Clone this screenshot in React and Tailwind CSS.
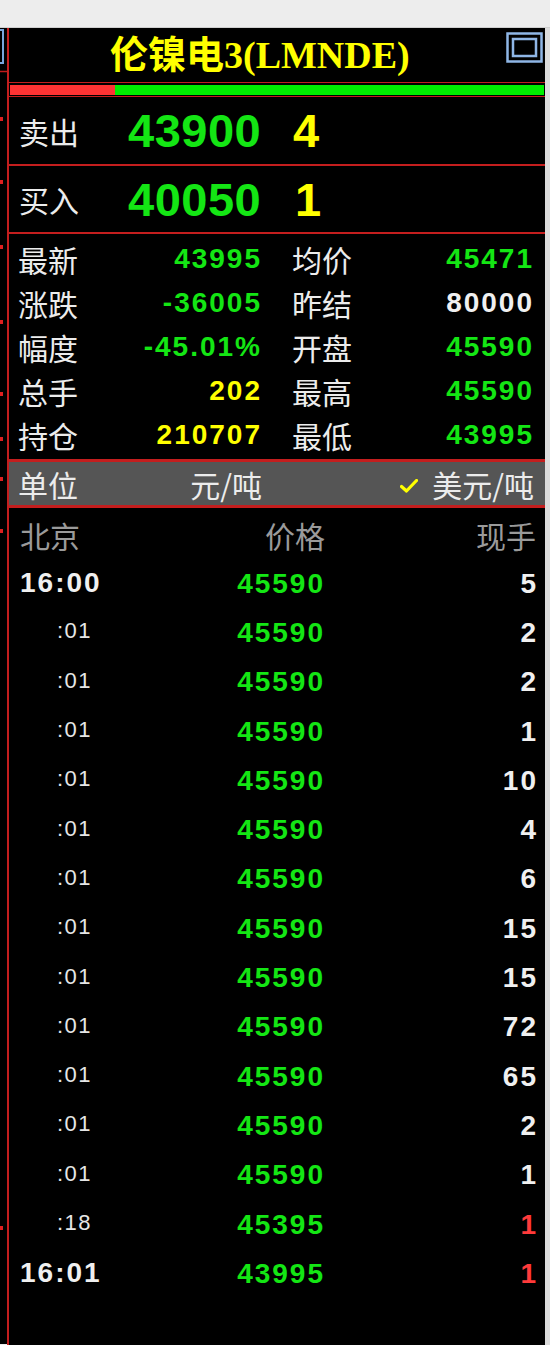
import React from "react";

const CJK = { fontFamily: '"Noto Sans CJK SC", "Noto Sans", sans-serif' };
const NUM = { fontFamily: '"Liberation Sans", Arial, sans-serif' };
const TITLE = { fontFamily: '"Liberation Serif", "Noto Sans CJK SC", serif' };

const stats = [
  ["最新", "43995", "text-[#14e614]", "均价", "45471", "text-[#14e614]"],
  ["涨跌", "-36005", "text-[#14e614]", "昨结", "80000", "text-[#f0f0f0]"],
  ["幅度", "-45.01%", "text-[#14e614]", "开盘", "45590", "text-[#14e614]"],
  ["总手", "202", "text-[#ffff00]", "最高", "45590", "text-[#14e614]"],
  ["持仓", "210707", "text-[#ffff00]", "最低", "43995", "text-[#14e614]"],
];

const trades = [
  ["16:00", true, "45590", "5", false],
  [":01", false, "45590", "2", false],
  [":01", false, "45590", "2", false],
  [":01", false, "45590", "1", false],
  [":01", false, "45590", "10", false],
  [":01", false, "45590", "4", false],
  [":01", false, "45590", "6", false],
  [":01", false, "45590", "15", false],
  [":01", false, "45590", "15", false],
  [":01", false, "45590", "72", false],
  [":01", false, "45590", "65", false],
  [":01", false, "45590", "2", false],
  [":01", false, "45590", "1", false],
  [":18", false, "45395", "1", true],
  ["16:01", true, "43995", "1", true],
];

function LeftStrip() {
  const dots = [120, 183, 248, 323, 395, 440, 480, 532, 1229];
  return (
    <svg width="7" height="1316" viewBox="0 0 7 1316" className="block">
      <rect x="0" y="0" width="7" height="1316" fill="#000" />
      <rect x="-2" y="2" width="5" height="33" fill="none" stroke="#7aa6dc" strokeWidth="2" />
      <line x1="0" y1="43.5" x2="7" y2="43.5" stroke="#c01c1c" strokeWidth="1.5" />
      {dots.map((d, i) => (
        <rect key={i} x="0" y={d - 29 - 2} width="3" height="4" fill="#e02020" />
      ))}
    </svg>
  );
}

function CornerIcon() {
  return (
    <svg width="37" height="31" viewBox="0 0 37 31" className="block">
      <rect x="1.5" y="1.5" width="34" height="28" fill="none" stroke="#8fb6e6" strokeWidth="2.5" />
      <rect x="7" y="7" width="23" height="17" fill="none" stroke="#8fb6e6" strokeWidth="2.5" />
    </svg>
  );
}

function Check() {
  return (
    <svg width="18" height="14" viewBox="0 0 18 14" className="block">
      <path d="M1.5 7.5 L6.5 12 L16.5 1.5" fill="none" stroke="#ffff00" strokeWidth="3.2" strokeLinecap="round" strokeLinejoin="round" />
    </svg>
  );
}

export default function App() {
  return (
    <div className="w-[550px] h-[1345px] bg-[#ececec] flex flex-col overflow-hidden">
      <div className="h-[28px] bg-[#ededed] border-b border-[#cfcfcf] shrink-0" />
      <div className="flex flex-1 min-h-0">
        <LeftStrip />
        <div className="w-[538px] bg-black border-l-2 border-[#c41e1e] flex flex-col">
          {/* title */}
          <div className="h-[54px] flex items-start relative">
            <div className="pl-[101px] pt-[8px] text-[#ffff00] text-[38px] leading-none font-bold whitespace-nowrap" style={TITLE}>
              伦镍电3(LMNDE)
            </div>
            <div className="ml-auto mt-[4px] mr-[2px]">
              <CornerIcon />
            </div>
          </div>
          {/* bar */}
          <div className="h-[1px] bg-[#c41e1e]" />
          <div className="h-[13px] flex items-center pl-[1px] pr-[1px]">
            <div className="h-[10px] w-[105px] bg-[#ff3434]" />
            <div className="h-[10px] flex-1 bg-[#00ee00]" />
          </div>
          <div className="h-[1px] bg-[#c41e1e]" />
          {/* sell */}
          <div className="h-[67px] flex items-center pl-[10px]">
            <div className="w-[109px] text-[30px] leading-none text-[#ececec]" style={CJK}>卖出</div>
            <div className="w-[165px] text-[47px] leading-none font-bold text-[#14e614] tracking-[0.5px]" style={NUM}>43900</div>
            <div className="text-[47px] leading-none font-bold text-[#ffff00]" style={NUM}>4</div>
          </div>
          <div className="h-[2px] bg-[#c41e1e]" />
          {/* buy */}
          <div className="h-[66px] flex items-center pl-[10px]">
            <div className="w-[109px] text-[30px] leading-none text-[#ececec]" style={CJK}>买入</div>
            <div className="w-[165px] text-[47px] leading-none font-bold text-[#14e614] tracking-[0.5px]" style={NUM}>40050</div>
            <div className="text-[47px] leading-none font-bold text-[#ffff00] pl-[2px]" style={NUM}>1</div>
          </div>
          <div className="h-[2px] bg-[#c41e1e]" />
          {/* stats */}
          <div className="pt-[3px] pb-[2px] flex flex-col">
            {stats.map((r, i) => (
              <div key={i} className="h-[44px] flex items-center pl-[9px] pr-[11px]">
                <div className="w-[244px] flex items-center justify-between">
                  <span className="text-[30px] leading-none text-[#ececec]" style={CJK}>{r[0]}</span>
                  <span className={`text-[28px] leading-none font-bold tracking-[2px] ${r[2]}`} style={NUM}>{r[1]}</span>
                </div>
                <div className="flex-1 flex items-center justify-between pl-[30px]">
                  <span className="text-[30px] leading-none text-[#ececec]" style={CJK}>{r[3]}</span>
                  <span className={`text-[28px] leading-none font-bold tracking-[2px] ${r[5]}`} style={NUM}>{r[4]}</span>
                </div>
              </div>
            ))}
          </div>
          {/* unit band */}
          <div className="h-[3px] bg-[#c41e1e]" />
          <div className="h-[43px] bg-[#555555] flex items-center pl-[9px] pr-[11px]">
            <div className="w-[244px] flex items-center justify-between">
              <span className="text-[30px] leading-none text-[#ececec]" style={CJK}>单位</span>
              <span className="text-[30px] leading-none text-[#ececec]" style={CJK}>元/吨</span>
            </div>
            <div className="flex-1 flex items-center justify-end">
              <span className="mr-[14px] mt-[4px]"><Check /></span>
              <span className="text-[30px] leading-none text-[#ececec]" style={CJK}>美元/吨</span>
            </div>
          </div>
          <div className="h-[3px] bg-[#c41e1e]" />
          {/* trades */}
          <div className="pt-[2px] flex flex-col">
            <div className="h-[49px] flex items-center pl-[11px] pr-[9px]">
              <div className="w-[100px] text-[30px] leading-none text-[#9a9a9a]" style={CJK}>北京</div>
              <div className="w-[205px] text-right text-[30px] leading-none text-[#9a9a9a]" style={CJK}>价格</div>
              <div className="flex-1 text-right text-[30px] leading-none text-[#9a9a9a]" style={CJK}>现手</div>
            </div>
            {trades.map((t, i) => (
              <div key={i} className="h-[49.3px] flex items-center pl-[11px] pr-[9px]">
                <div className="w-[100px]" style={NUM}>
                  {t[1] ? (
                    <span className="text-[28px] leading-none font-bold tracking-[2px] text-[#f0f0f0]">{t[0]}</span>
                  ) : (
                    <span className="pl-[37px] text-[22px] leading-none tracking-[1.5px] text-[#e6e6e6]">{t[0]}</span>
                  )}
                </div>
                <div className="w-[205px] text-right text-[28px] leading-none font-bold tracking-[2px] text-[#14e614] -mr-[2px]" style={NUM}>{t[2]}</div>
                <div className={`flex-1 text-right text-[28px] leading-none font-bold tracking-[2px] -mr-[2px] ${t[4] ? "text-[#ff3a3a]" : "text-[#f0f0f0]"}`} style={NUM}>{t[3]}</div>
              </div>
            ))}
          </div>
        </div>
        <div className="flex-1 bg-[#dcdcdc]" />
      </div>
    </div>
  );
}
